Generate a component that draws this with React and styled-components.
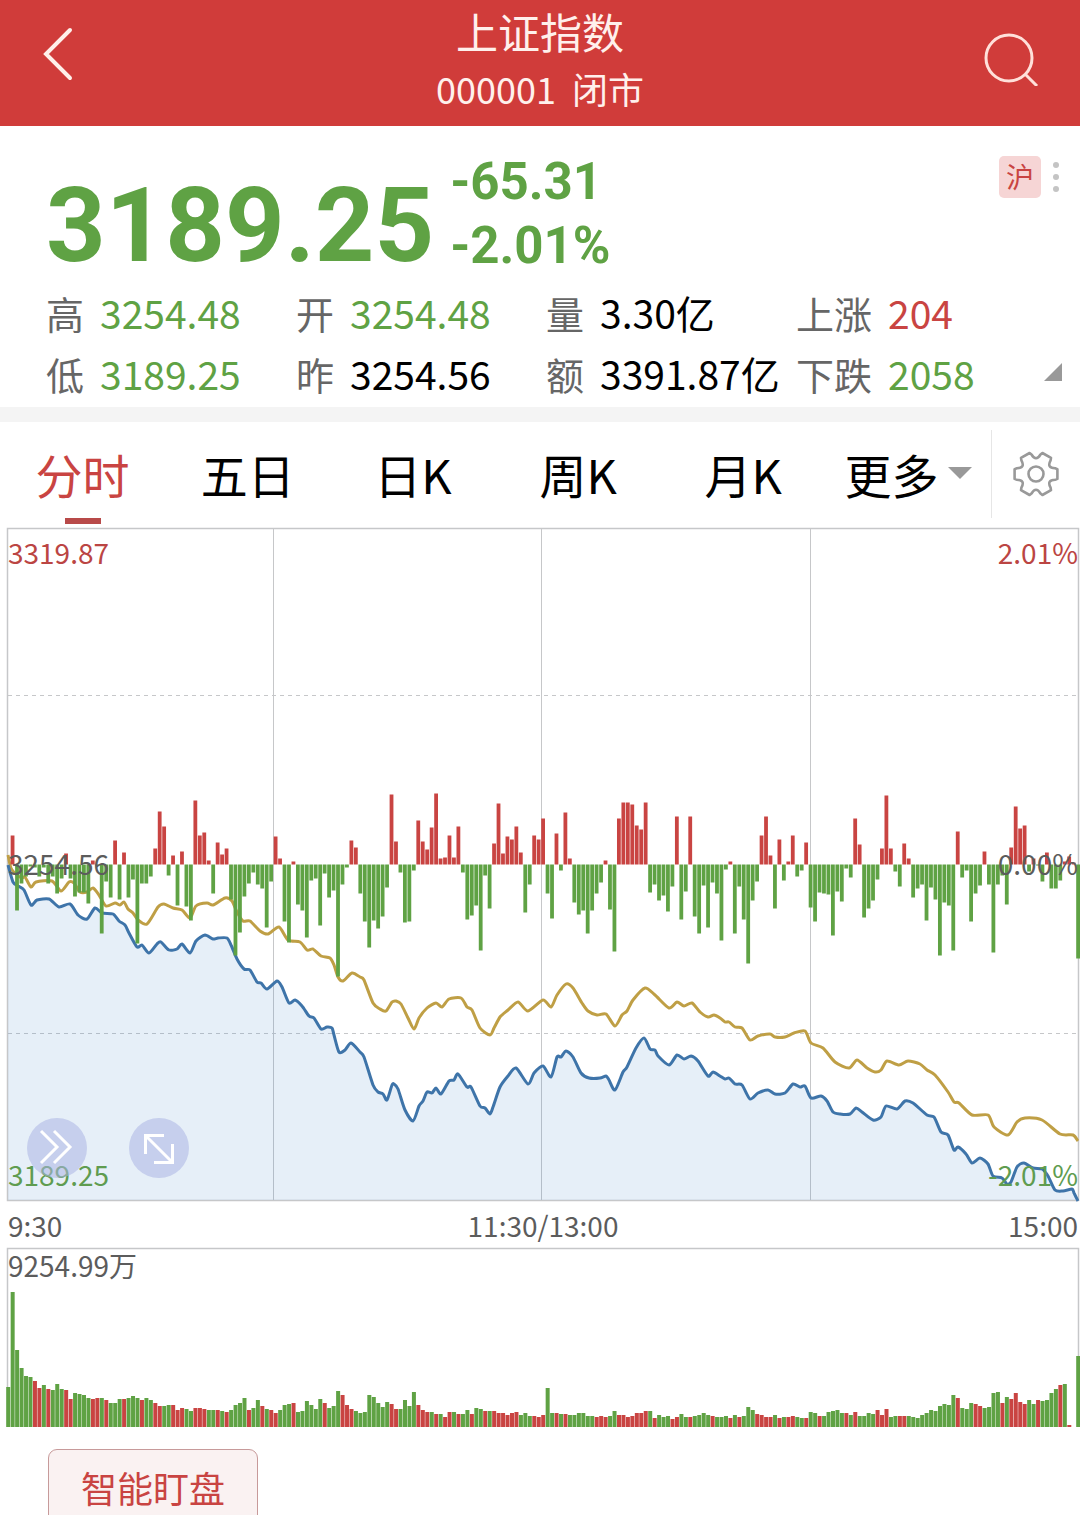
import React, { useState } from "react";
import styled, { createGlobalStyle } from "styled-components";

const RED = "#c94442";
const GREEN = "#5fa244";

// index line and average line, [x, y] on the chart canvas
const PRICE_LINE = [
  [8, 865], [13, 882], [18, 886], [24, 890], [31, 905], [37, 900], [49, 899], [59, 907], [70, 904],
  [78, 915], [87, 919], [95, 908], [102, 913], [113, 914], [119, 921], [125, 925], [129, 933],
  [137, 947], [142, 945], [149, 953], [157, 944], [161, 942], [169, 950], [177, 949], [182, 944],
  [190, 953], [196, 941], [205, 935], [213, 939], [218, 938], [227, 938], [231, 945], [237, 959],
  [244, 969], [250, 970], [257, 982], [261, 983], [267, 989], [277, 981], [282, 987], [289, 1003],
  [295, 1000], [302, 1006], [309, 1016], [314, 1018], [321, 1029], [327, 1027], [332, 1028],
  [334, 1035], [339, 1052], [345, 1050], [351, 1043], [360, 1052], [364, 1057], [373, 1085],
  [378, 1092], [383, 1094], [387, 1100], [392, 1085], [394, 1084], [398, 1089], [405, 1110],
  [413, 1121], [419, 1106], [423, 1101], [427, 1092], [432, 1093], [436, 1088], [441, 1094],
  [449, 1081], [454, 1080], [458, 1074], [467, 1087], [471, 1087], [480, 1106], [485, 1108],
  [490, 1114], [493, 1107], [500, 1087], [508, 1076], [516, 1068], [528, 1084], [534, 1073],
  [543, 1066], [551, 1077], [557, 1057], [561, 1057], [566, 1051], [573, 1057], [581, 1073],
  [589, 1078], [600, 1078], [606, 1076], [609, 1080], [615, 1090], [623, 1072], [627, 1067],
  [636, 1048], [644, 1038], [650, 1049], [655, 1050], [658, 1056], [669, 1065], [677, 1055],
  [684, 1059], [691, 1056], [698, 1061], [708, 1076], [713, 1072], [720, 1076], [725, 1079],
  [729, 1078], [735, 1084], [742, 1085], [750, 1099], [758, 1093], [768, 1090], [775, 1094],
  [785, 1093], [793, 1084], [800, 1087], [805, 1086], [811, 1098], [821, 1096], [827, 1101],
  [833, 1112], [840, 1114], [850, 1114], [856, 1108], [862, 1112], [873, 1120], [881, 1117],
  [886, 1106], [897, 1109], [905, 1101], [913, 1103], [927, 1115], [934, 1117], [941, 1132],
  [948, 1135], [954, 1150], [958, 1147], [966, 1154], [972, 1163], [980, 1158], [988, 1164],
  [993, 1176], [1002, 1178], [1007, 1184], [1011, 1182], [1017, 1167], [1024, 1163], [1033, 1168],
  [1042, 1169], [1048, 1176], [1055, 1190], [1063, 1191], [1072, 1189], [1074, 1193], [1078, 1201],
];

const AVERAGE_LINE = [
  [8, 855], [11, 868], [17, 875], [22, 878], [25, 877], [31, 887], [36, 882], [52, 881], [61, 891],
  [69, 882], [74, 883], [80, 892], [87, 892], [93, 888], [99, 895], [106, 906], [115, 903],
  [120, 905], [124, 902], [128, 909], [133, 913], [138, 920], [147, 924], [158, 907], [164, 904],
  [173, 908], [182, 910], [190, 918], [196, 906], [207, 903], [213, 905], [225, 898], [232, 901],
  [237, 912], [243, 921], [250, 921], [260, 931], [268, 934], [279, 927], [288, 940], [300, 942],
  [307, 950], [313, 949], [321, 956], [330, 958], [334, 965], [338, 977], [343, 981], [352, 973],
  [360, 977], [364, 980], [373, 1003], [380, 1009], [386, 1011], [392, 1002], [396, 1001],
  [401, 1004], [408, 1018], [414, 1029], [419, 1018], [427, 1008], [436, 1003], [442, 1007],
  [449, 999], [461, 998], [467, 1007], [472, 1010], [480, 1028], [490, 1035], [494, 1028],
  [500, 1017], [508, 1010], [518, 1002], [528, 1011], [543, 1000], [551, 1007], [557, 995],
  [566, 984], [573, 988], [582, 1003], [588, 1011], [597, 1015], [606, 1014], [615, 1026],
  [622, 1015], [627, 1011], [633, 1000], [645, 988], [655, 995], [669, 1008], [677, 1002],
  [684, 1006], [692, 1003], [700, 1012], [708, 1017], [714, 1015], [720, 1018], [725, 1022],
  [729, 1022], [735, 1027], [742, 1028], [750, 1040], [758, 1036], [770, 1034], [775, 1037],
  [785, 1037], [794, 1033], [805, 1031], [811, 1043], [823, 1048], [835, 1062], [849, 1068],
  [857, 1060], [867, 1068], [875, 1072], [881, 1070], [887, 1061], [899, 1065], [908, 1061],
  [920, 1064], [927, 1070], [935, 1075], [948, 1092], [954, 1102], [959, 1103], [972, 1115],
  [988, 1115], [994, 1127], [1008, 1135], [1017, 1122], [1025, 1118], [1042, 1120], [1060, 1134],
  [1073, 1135], [1078, 1141],
];

// one value a minute, up is positive
const MOMENTUM = [
  0, 29, -46, -19, -12, -2, -3, -12, -3, -19, -12, -29, -14, 11, -14, -32, -28, -28, -39, 4,
  -1, -69, -17, -33, 24, -35, 12, -33, -15, -79, -19, -19, -12, 16, 53, 38, -11, 9, -41, 13,
  -42, -56, 64, 29, 32, 4, -29, 22, 10, 16, -35, -91, -68, -32, -19, -8, -20, -24, -63, -17,
  28, 6, -57, -78, 3, -40, -46, -73, -16, -14, -61, -9, -33, -26, -112, -20, -3, 24, 17, -29,
  -57, -83, -56, -64, -52, -23, 70, 23, -8, -58, -57, -6, 44, 23, 15, 37, 71, 6, 7, 29,
  7, 38, -8, -55, -51, -41, -86, -11, -44, 21, 61, 11, 28, 25, 38, 12, -48, -20, 29, 25,
  46, -29, -54, 31, -6, 52, 6, -38, -50, -46, -69, -46, -29, -18, 4, -45, -87, 46, 62, 62,
  60, 39, 35, 62, -28, -20, -36, -31, -47, -22, 48, -55, -27, 48, -52, -69, -21, -63, -18, -29,
  -76, -5, 3, -69, -22, -55, -99, -36, -17, 29, 48, 9, -44, 25, -16, 3, 29, -12, -6, 22,
  -43, -57, -28, -29, -30, -71, -27, -37, -4, -13, 46, 20, -53, -44, -36, -15, 16, 69, 16, -7,
  -22, 21, 6, -33, -24, -20, -56, -23, -35, -91, -38, -41, -86, 33, -13, -6, -57, -29, -21, 13,
  -20, -88, -20, -11, -40, 17, 58, 36, 39, -7, 6, -1, -17, 12, -24, -24, -16, 3, 8, 2, -94,
];

// red bars are positive, green ones negative
const VOLUME = [
  -40, -135, -77, -59, -51, -50, 46, 39, -42, 38, -37, -43, -38, 37, 28, -34, -33, -32, -29, 28,
  29, -29, 27, -24, -24, -28, 28, -29, -31, -29, 27, -29, -27, 24, 21, -21, -22, 22, 17, 19,
  -18, -16, 19, 19, 18, -17, -17, 17, -16, 15, -17, -22, -24, -29, 17, -19, -27, 21, -18, 17,
  14, -17, -22, -23, 24, -15, -16, -26, -22, -18, -28, 24, -19, -21, -36, 32, 22, 18, -16, -14,
  -15, -32, -30, -24, -20, -25, 23, 18, -18, -27, -21, -35, 22, 17, 15, -15, 13, -13, 10, 15,
  -15, 13, -13, -17, 13, -19, -18, 16, -16, 16, 14, 14, 12, 14, 15, -12, -14, -11, 11, 10,
  12, -39, -14, 14, -13, 13, -12, -12, -14, -14, -11, -11, 10, 11, 10, -11, -16, 12, 12, 10,
  11, 14, 14, 16, -16, 9, -12, -10, -11, 8, 10, -13, -10, 10, -11, -12, -14, -12, 11, -10,
  -10, -11, 9, -12, 10, -11, -20, -17, 13, 12, 10, 10, -12, 9, -10, 10, 11, -10, -9, 9,
  -15, -14, 11, -11, -15, -16, -17, -14, 14, -12, 15, -11, -11, -14, -13, 17, 12, 18, -10, -11,
  11, 11, -11, -10, -9, -12, -14, -17, -16, -21, -23, -22, -32, 29, -19, -18, -24, 23, 21, -19,
  -20, -34, -35, 24, -30, 28, 34, 25, 23, -27, -23, 27, -26, -27, -34, -38, 42, -43, 2, 0, -71,
];

const STATS = [
  { label: "高", value: "3254.48", color: GREEN },
  { label: "开", value: "3254.48", color: GREEN },
  { label: "量", value: "3.30亿" },
  { label: "上涨", value: "204", color: RED },
  { label: "低", value: "3189.25", color: GREEN },
  { label: "昨", value: "3254.56" },
  { label: "额", value: "3391.87亿" },
  { label: "下跌", value: "2058", color: GREEN },
];

const TABS = ["分时", "五日", "日K", "周K", "月K", "更多"];

const barX = (i) => 8 + (i * 1070) / 240;

const smoothPath = (points) => {
  let d = `M${points[0][0]} ${points[0][1]}`;
  for (let i = 0; i < points.length - 1; i++) {
    const p0 = points[i - 1] || points[i];
    const p1 = points[i];
    const p2 = points[i + 1];
    const p3 = points[i + 2] || p2;
    const c = [
      p1[0] + (p2[0] - p0[0]) / 8,
      p1[1] + (p2[1] - p0[1]) / 8,
      p2[0] - (p3[0] - p1[0]) / 8,
      p2[1] - (p3[1] - p1[1]) / 8,
    ];
    d += `C${c.map((n) => n.toFixed(1)).join(" ")} ${p2[0]} ${p2[1]}`;
  }
  return d;
};

const gearPath = () => {
  const at = (r, deg) => {
    const a = (deg * Math.PI) / 180;
    return `${(24 + r * Math.cos(a)).toFixed(1)} ${(24 + r * Math.sin(a)).toFixed(1)}`;
  };
  let d = `M${at(22, -13)}`;
  for (let a = 0; a < 360; a += 60) {
    d += `L${at(22, a + 13)}L${at(20, a + 17)}Q${at(12, a + 30)} ${at(20, a + 43)}L${at(22, a + 47)}`;
  }
  return d + "Z";
};

const PriceChart = () => {
  const line = smoothPath(PRICE_LINE);
  return (
    <Canvas viewBox="0 524 1080 682">
      <g stroke="#c6c7c9" fill="none">
        <rect x="7.5" y="528.5" width="1071" height="672" strokeWidth="1.5" />
        <path d="M273.5 528V1200M541.5 528V1200M810.5 528V1200" />
        <path d="M8 695.5H1078M8 1033.5H1078" strokeDasharray="4 4" />
      </g>
      <path d={`${line}V1200H8Z`} fill="#3a80c8" fillOpacity="0.13" />
      <g fill="none" strokeWidth="3" strokeLinejoin="round">
        <path d={smoothPath(AVERAGE_LINE)} stroke="#bf9f45" />
        <path d={line} stroke="#3e74a9" />
      </g>
      {MOMENTUM.map((v, i) => (
        <rect
          key={i}
          x={barX(i) - 1.8}
          y={v > 0 ? 864.5 - v : 864.5}
          width="3.8"
          height={Math.abs(v)}
          fill={v > 0 ? RED : GREEN}
        />
      ))}
    </Canvas>
  );
};

const VolumeChart = () => (
  <Canvas viewBox="0 1244 1080 188">
    <path d="M7.5 1427V1248.5H1078.5V1427" fill="none" stroke="#c6c7c9" strokeWidth="1.5" />
    {VOLUME.map((v, i) => (
      <rect
        key={i}
        x={barX(i) - 1.8}
        y={1427 - Math.abs(v)}
        width="4"
        height={Math.abs(v)}
        fill={v > 0 ? RED : GREEN}
      />
    ))}
  </Canvas>
);

const App = () => {
  const [tab, setTab] = useState("分时");

  return (
    <Page>
      <GlobalStyle />
      <Header>
        <IconButton aria-label="返回">
          <svg width="60" height="60" viewBox="0 0 60 60" fill="none" stroke="#fff0ea" strokeWidth="4">
            <path d="M34 4L10 28L34 52" strokeLinecap="round" />
          </svg>
        </IconButton>
        <Heading>
          <Title>上证指数</Title>
          <SubTitle>
            <span>000001</span>
            <span>闭市</span>
          </SubTitle>
        </Heading>
        <IconButton aria-label="搜索">
          <svg width="60" height="60" viewBox="0 0 60 60" fill="none" stroke="#ffe0da" strokeWidth="3">
            <circle cx="25" cy="32" r="23" />
            <path d="M41 48L53 60" />
          </svg>
        </IconButton>
      </Header>

      <Quote>
        <PriceRow>
          <Price>3189.25</Price>
          <Changes>
            <span>-65.31</span>
            <span>-2.01%</span>
          </Changes>
          <Market>沪</Market>
          <MoreButton aria-label="更多信息">
            <svg width="10" height="34" viewBox="0 0 10 34" fill="#c4c4c4">
              <circle cx="5" cy="5" r="3" />
              <circle cx="5" cy="17" r="3" />
              <circle cx="5" cy="29" r="3" />
            </svg>
          </MoreButton>
        </PriceRow>
        <Stats>
          {STATS.map((s) => (
            <Stat key={s.label}>
              <dt>{s.label}</dt>
              <StatValue $color={s.color}>{s.value}</StatValue>
            </Stat>
          ))}
        </Stats>
        <ExpandButton aria-label="展开">
          <svg width="18" height="18" viewBox="0 0 18 18">
            <path d="M18 0V18H0Z" fill="#999" />
          </svg>
        </ExpandButton>
      </Quote>

      <Tabs>
        {TABS.map((t) => (
          <Tab key={t} $active={t === tab} onClick={() => setTab(t)}>
            {t}
            {t === "更多" && (
              <svg width="24" height="12" viewBox="0 0 24 12">
                <path d="M0 0H24L12 12Z" fill="#999" />
              </svg>
            )}
          </Tab>
        ))}
        <SettingsButton aria-label="设置">
          <svg width="48" height="48" viewBox="0 0 48 48" fill="none" stroke="#999" strokeWidth="2.6" strokeLinejoin="round">
            <path d={gearPath()} />
            <circle cx="24" cy="24" r="7.5" />
          </svg>
        </SettingsButton>
      </Tabs>

      <ChartBox>
        <PriceChart />
        <ChartLabels>
          <LabelRow $color="#bb4543">
            <span>3319.87</span>
            <span>2.01%</span>
          </LabelRow>
          <LabelRow $color="#5c5c5c">
            <span>3254.56</span>
            <span>0.00%</span>
          </LabelRow>
          <LabelRow $color="#5f9c50">
            <span>3189.25</span>
            <span>-2.01%</span>
          </LabelRow>
        </ChartLabels>
        <ChartTools>
          <RoundButton aria-label="快进">
            <svg width="60" height="60" viewBox="0 0 60 60" fill="none" stroke="#fff" strokeWidth="3">
              <path d="M14 13L30 29L14 45M27 13L43 29L27 45" />
            </svg>
          </RoundButton>
          <RoundButton aria-label="全屏">
            <svg width="60" height="60" viewBox="0 0 60 60" fill="none" stroke="#fff" strokeWidth="3">
              <path d="M16.5 36V17.5H35M17 18L43 44M43.5 26V44.5H25" />
            </svg>
          </RoundButton>
        </ChartTools>
      </ChartBox>
      <Times>
        <span>9:30</span>
        <span>11:30/13:00</span>
        <span>15:00</span>
      </Times>
      <ChartBox>
        <VolumeChart />
        <VolumeLabel>9254.99万</VolumeLabel>
      </ChartBox>

      <Footer>
        <WatchButton>智能盯盘</WatchButton>
      </Footer>
    </Page>
  );
};
export default App;

const GlobalStyle = createGlobalStyle`
  * {
    box-sizing: border-box;
  }
  body {
    margin: 0;
    background: #fff;
    font-family: "Noto Sans CJK SC", sans-serif;
  }
  button {
    padding: 0;
    border: none;
    background: none;
    font-family: inherit;
    cursor: pointer;
  }
  svg {
    display: block;
  }
`;

const Page = styled.div`
  display: flex;
  flex-direction: column;
  height: 100vh;
  overflow: hidden;
`;

const Header = styled.header`
  display: flex;
  justify-content: space-between;
  flex-shrink: 0;
  height: 126px;
  padding: 0 36px;
  background-color: #d03c3a;
`;

const IconButton = styled.button`
  display: flex;
  align-items: center;
  width: 60px;
  height: 112px;
`;

const Heading = styled.div`
  display: flex;
  flex-direction: column;
  padding-top: 2px;
  text-align: center;
  color: #fff0ec;
`;

const Title = styled.h1`
  margin: 0;
  font-size: 42px;
  font-weight: 400;
  line-height: 58px;
`;

const SubTitle = styled.div`
  display: flex;
  gap: 16px;
  font-size: 36px;
  line-height: 56px;
`;

const Quote = styled.section`
  position: relative;
  flex-shrink: 0;
  padding: 24px 19px 3px 46px;
  border-bottom: 15px solid #f4f4f4;
`;

const PriceRow = styled.div`
  display: flex;
  height: 128px;
  font-family: Roboto, sans-serif;
  font-weight: 700;
  color: ${GREEN};
`;

const Price = styled.div`
  padding-top: 22px;
  font-size: 104px;
  line-height: 108px;
`;

const Changes = styled.div`
  display: flex;
  flex-direction: column;
  margin-left: 16px;
  font-size: 51px;
  line-height: 64px;
`;

const Market = styled.span`
  width: 42px;
  height: 42px;
  margin: 6px 10px 0 auto;
  border-radius: 5px;
  background-color: #f6d5d5;
  color: ${RED};
  font-family: "Noto Sans CJK SC", sans-serif;
  font-size: 28px;
  font-weight: 400;
  line-height: 40px;
  text-align: center;
`;

const MoreButton = styled.button`
  height: 54px;
`;

const Stats = styled.dl`
  display: grid;
  grid-template-columns: repeat(4, 1fr);
  margin: 4px 15px 0 0;
  font-size: 39px;
  line-height: 61px;
`;

const Stat = styled.div`
  display: flex;
  align-items: baseline;
  gap: 16px;
  white-space: nowrap;

  dt {
    color: #666;
    font-size: 38px;
  }
`;

const StatValue = styled.dd`
  margin: 0;
  color: ${(props) => props.$color || "#000"};
`;

const ExpandButton = styled.button`
  position: absolute;
  right: 18px;
  bottom: 26px;
`;

const Tabs = styled.nav`
  display: grid;
  grid-template-columns: repeat(6, 1fr) 89px;
  flex-shrink: 0;
  height: 102px;
`;

const Tab = styled.button`
  position: relative;
  display: flex;
  align-items: center;
  justify-content: center;
  gap: 10px;
  color: ${(props) => (props.$active ? RED : "#000")};
  font-size: 47px;

  &::after {
    content: "";
    position: absolute;
    bottom: 0;
    width: 36px;
    height: 6px;
    background-color: ${(props) => (props.$active ? "#b84a49" : "transparent")};
  }
`;

const SettingsButton = styled.button`
  display: flex;
  align-items: center;
  justify-content: center;
  height: 88px;
  margin-top: 8px;
  border-left: 1px solid #e6e6e6;
`;

const ChartBox = styled.div`
  position: relative;
  flex-shrink: 0;
`;

const Canvas = styled.svg`
  width: 100%;
  height: auto;
`;

const ChartLabels = styled.div`
  position: absolute;
  inset: 12px 2px 16px 8px;
  display: flex;
  flex-direction: column;
  justify-content: space-between;
  font-size: 28px;
  line-height: 32px;
`;

const LabelRow = styled.div`
  display: flex;
  justify-content: space-between;
  color: ${(props) => props.$color};
`;

const ChartTools = styled.div`
  position: absolute;
  left: 27px;
  bottom: 28px;
  display: flex;
  gap: 42px;
`;

const RoundButton = styled.button`
  width: 60px;
  height: 60px;
  border-radius: 50%;
  background-color: rgba(172, 180, 228, 0.55);
`;

const Times = styled.div`
  display: grid;
  grid-template-columns: 1fr auto 1fr;
  flex-shrink: 0;
  padding: 0 2px 0 8px;
  color: #5c5c5c;
  font-size: 28px;
  line-height: 38px;

  span:last-child {
    text-align: right;
  }
`;

const VolumeLabel = styled.span`
  position: absolute;
  top: 5px;
  left: 8px;
  color: #5c5c5c;
  font-size: 28px;
  line-height: 32px;
`;

const Footer = styled.footer`
  flex: 1;
  min-height: 0;
  padding: 17px 48px 0;
`;

const WatchButton = styled.button`
  width: 210px;
  height: 76px;
  border: 1px solid #c79a9a;
  border-radius: 9px;
  background-color: #faf2f2;
  color: ${RED};
  font-size: 36px;
`;
